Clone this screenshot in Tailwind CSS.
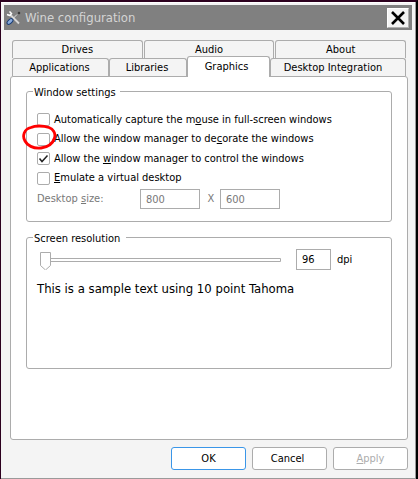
<!DOCTYPE html>
<html lang="en">

<head>
  <meta charset="UTF-8">
  <meta name="viewport" content="width=device-width, initial-scale=1.0">
  <title>Wine configuration</title>
  <script src="https://cdn.jsdelivr.net/npm/@tailwindcss/browser@4"></script>
</head>

<body class="bg-black font-['DejaVu_Sans_Condensed','DejaVu_Sans',sans-serif] text-[11px] leading-4 text-black">
  <div class="flex flex-col min-h-screen border-t-2 border-t-[#2c001e] border-l border-l-[#2c001e] border-r-2 border-r-black">
    <div class="flex-1 flex flex-col bg-[#f4f4f4] border-r border-b border-[#9a9a9a]">

      <!-- Title bar -->
      <header class="flex items-center h-7 px-[3px] pt-0.5 border-t border-white">
        <div class="flex-1 flex items-center h-[25px] pl-0.5 pr-[3px] bg-[#808080]">
          <svg class="w-4 h-4" viewBox="0 0 16 16" fill="none">
            <path d="M5 5.500L13 13.500" stroke="#d8d8d8" stroke-width="1.800" />
            <path d="M3.500 1.500L5.500 3.500L4 5.500L1 4.500" stroke="#fff" stroke-width="1.500" />
            <path d="M11 4.500L6.500 9" stroke="#e0e0e0" stroke-width="1" />
            <path d="M11.500 3L13 1.500L14.500 3L13 4.500Z" fill="#333" />
            <ellipse cx="4" cy="11.500" rx="3.500" ry="2" transform="rotate(-42 4 11.500)" fill="#8aabdc" stroke="#173b75" />
          </svg>
          <h1 class="flex-1 pl-[3px] text-[13px] text-[#d4d4d4]">Wine configuration</h1>
          <button aria-label="Close" class="flex items-center justify-center w-[22px] h-5 bg-[#f4f4f4] border border-t-white border-l-white border-r-[#b0b0b0] border-b-[#b0b0b0]">
            <svg class="w-3.5 h-3.5" viewBox="0 0 14 14" stroke="#000" stroke-width="2.600">
              <path d="M1 1L13 13M13 1L1 13" />
            </svg>
          </button>
        </div>
      </header>

      <main class="flex-1 flex flex-col pl-[9px] pr-[7px] pt-2.5 pb-2">
        <!-- Tabs -->
        <nav class="px-0.5">
          <div class="flex gap-px">
            <button class="flex-1 h-[18px] border border-b-0 border-[#acacac] rounded-t-[3px]">Drives</button>
            <button class="flex-1 h-[18px] border border-b-0 border-[#acacac] rounded-t-[3px]">Audio</button>
            <button class="flex-1 h-[18px] border border-b-0 border-[#acacac] rounded-t-[3px]">About</button>
          </div>
          <div class="flex items-end">
            <button class="w-[97px] h-[18px] pr-0.5 border border-b-0 border-[#acacac] rounded-t-[3px]">Applications</button>
            <button class="w-[78px] h-[18px] pr-0.5 border border-b-0 border-[#acacac] rounded-t-[3px]">Libraries</button>
            <button class="relative w-[83px] h-[21px] pr-1 -mt-[3px] -mb-px bg-white border border-b-0 border-[#acacac] rounded-t-[3px]">Graphics</button>
            <button class="flex-1 h-[18px] pr-2.5 border border-b-0 border-[#acacac] rounded-t-[3px]">Desktop Integration</button>
          </div>
        </nav>

        <!-- Graphics page -->
        <section class="flex-1 flex flex-col gap-[5px] px-[15px] pt-1 bg-white border border-[#acacac] rounded-[3px]">
          <fieldset class="h-[141px] px-2.5 border border-[#acacac] rounded-[3px]">
            <legend class="-ml-1 pt-1 pl-px pr-1">Window settings</legend>
            <div class="grid grid-rows-4 h-[78px] mt-[9px]">
              <label class="flex items-center gap-1">
                <input type="checkbox" class="appearance-none w-[13px] h-[13px] border border-[#acacac] rounded-xs">
                <span>Automatically capture the m<u>o</u>use in full-screen windows</span>
              </label>
              <label class="relative flex items-center gap-1">
                <input type="checkbox" class="appearance-none w-[13px] h-[13px] border border-[#acacac] rounded-xs">
                <span>Allow the window manager to de<u>c</u>orate the windows</span>
                <!-- red marker ring -->
                <svg class="absolute -left-4 -top-1.5 w-9 h-[26px]" viewBox="0 0 36 26" fill="none" stroke="#f00" stroke-width="2.800">
                  <path d="M10 3.500C14 1.500 22 1.500 28 3.500C32 5 35 9 33.500 14C32 19 27 23 20 24C12 25 6 21 4 17C1 12 3 5 10 3.500Z" />
                </svg>
              </label>
              <label class="flex items-center gap-1">
                <span class="relative flex">
                  <input type="checkbox" checked class="appearance-none w-[13px] h-[13px] border border-[#acacac] rounded-xs">
                  <svg class="absolute inset-0 w-[13px] h-[13px]" viewBox="0 0 13 13" fill="none" stroke="#222" stroke-width="1.500">
                    <path d="M2.500 6.500L5 9.500L10.500 3.500" />
                  </svg>
                </span>
                <span>Allow the <u>w</u>indow manager to control the windows</span>
              </label>
              <label class="flex items-center gap-1">
                <input type="checkbox" class="appearance-none w-[13px] h-[13px] border border-[#acacac] rounded-xs">
                <span><u>E</u>mulate a virtual desktop</span>
              </label>
            </div>
            <div class="flex items-center mt-px text-[#787878]">
              <label for="desktop-w" class="w-[103px]">Desktop <u>s</u>ize:</label>
              <input id="desktop-w" type="text" value="800" disabled class="w-[60px] h-5 px-[5px] border border-[#acacac]">
              <label for="desktop-h" class="w-5 pl-0.5 text-center">X</label>
              <input id="desktop-h" type="text" value="600" disabled class="w-[60px] h-5 px-[5px] border border-[#acacac]">
            </div>
          </fieldset>

          <fieldset class="h-[142px] px-2.5 border border-[#acacac] rounded-[3px]">
            <legend class="-ml-1 pt-1 pl-px pr-1.5">Screen resolution</legend>
            <div class="flex items-center mt-0.5">
              <div class="relative w-[244px] h-5">
                <svg class="w-full h-5" viewBox="0 0 244 20" fill="#fff" stroke="#acacac">
                  <path d="M8.500 8.500H243.500V11.500H8.500Z" />
                  <path d="M3.500 2.500H13.500V15.500L8.500 20L3.500 15.500Z" />
                </svg>
                <input type="range" min="96" max="480" value="96" aria-label="Screen resolution" class="absolute inset-0 w-full opacity-0">
              </div>
              <input id="dpi" type="text" value="96" class="w-[35px] h-[21px] ml-[15px] px-[5px] border border-[#acacac]">
              <label for="dpi" class="ml-1.5">dpi</label>
            </div>
            <p class="mt-[11px] text-[13px]">This is a sample text using 10 point Tahoma</p>
          </fieldset>
        </section>

        <!-- Dialog buttons -->
        <footer class="flex justify-end gap-1.5 mt-[7px]">
          <button class="w-[75px] h-[23px] bg-white border border-[#3a96e8] rounded-[3px]">OK</button>
          <button class="w-[75px] h-[23px] pr-1 bg-white border border-[#acacac] rounded-[3px]">Cancel</button>
          <button disabled class="w-[75px] h-[23px] bg-white border border-[#acacac] rounded-[3px] text-[#acacac]"><u>A</u>pply</button>
        </footer>
      </main>
    </div>
  </div>
</body>

</html>
